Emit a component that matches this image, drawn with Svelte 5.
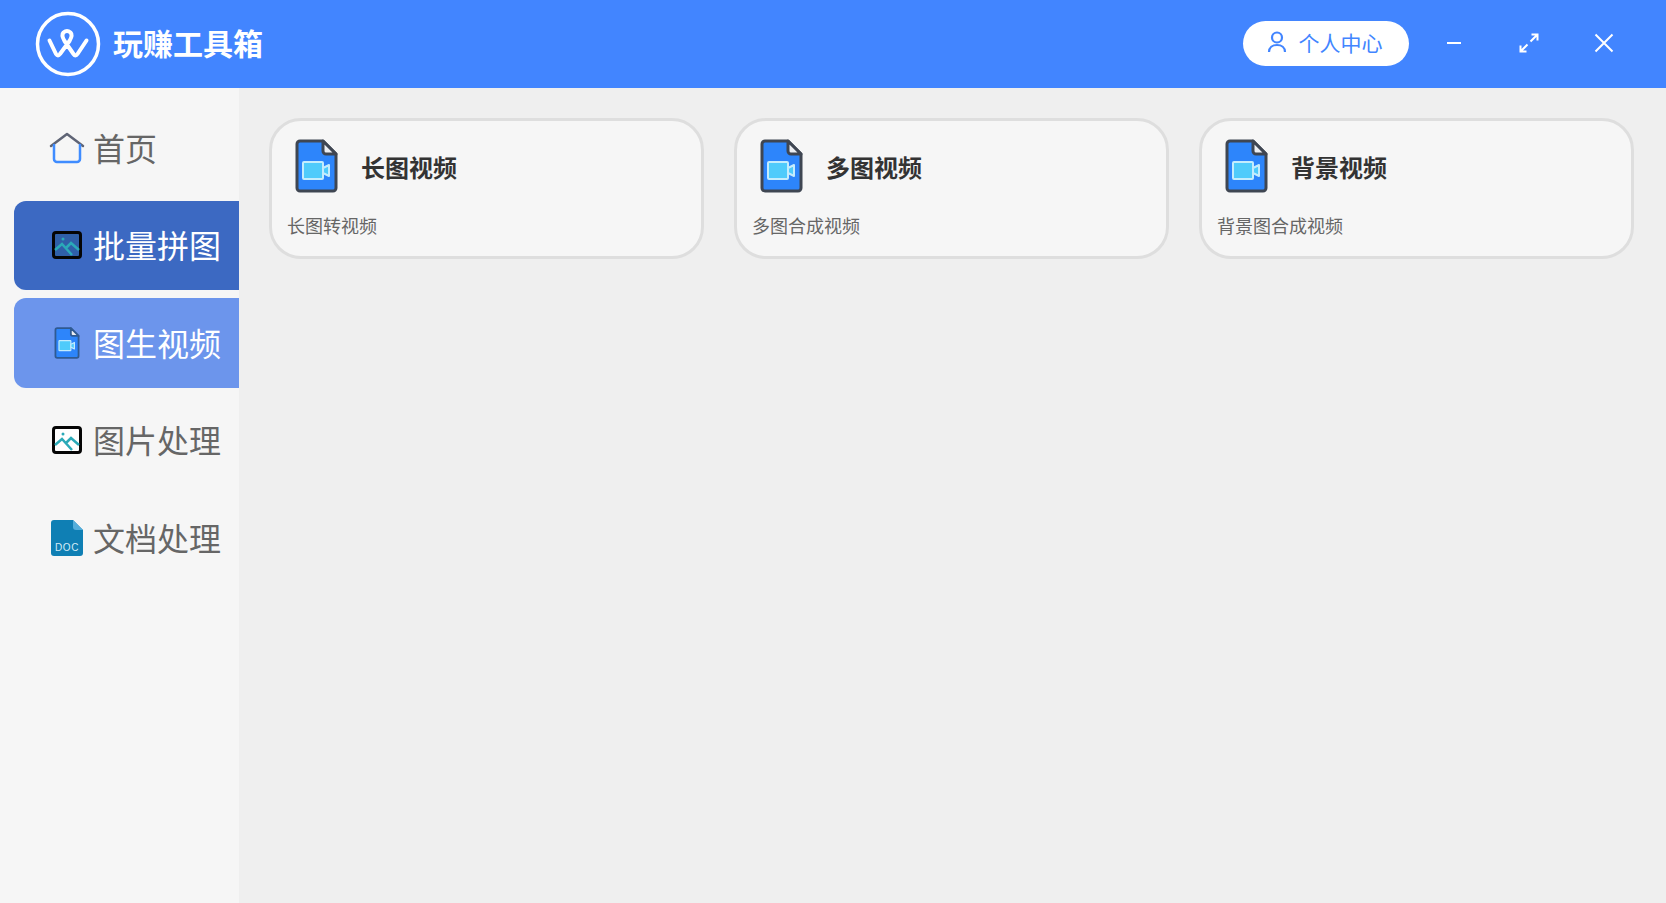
<script>
	const nav = [
		{ label: '首页', icon: 'home' },
		{ label: '批量拼图', icon: 'pic', cls: 'dark' },
		{ label: '图生视频', icon: 'file', cls: 'light' },
		{ label: '图片处理', icon: 'pic' },
		{ label: '文档处理', icon: 'doc' }
	];
	const cards = [
		{ title: '长图视频', desc: '长图转视频' },
		{ title: '多图视频', desc: '多图合成视频' },
		{ title: '背景视频', desc: '背景图合成视频' }
	];
</script>

{#snippet fileIcon(w, h, edge)}
	<svg width={w} height={h} viewBox="0 0 43 54">
		<path d="M5 2h23l13 13v34a3 3 0 0 1-3 3H5a3 3 0 0 1-3-3V5a3 3 0 0 1 3-3z" fill="#2d85fb" stroke={edge} stroke-width="3" stroke-linejoin="round" />
		<path d="M28 2v10a3 3 0 0 0 3 3h10z" fill="#eceef2" stroke={edge} stroke-width="3" stroke-linejoin="round" />
		<rect x="8" y="23" width="20" height="17" rx="1" fill="#4fcbfb" stroke="#c4ecfd" stroke-width="2" />
		<path d="M28 29l6-3v11l-6-3z" fill="#4fcbfb" stroke="#c4ecfd" stroke-width="2" stroke-linejoin="round" />
	</svg>
{/snippet}

<div class="app">
	<header>
		<svg class="logo" width="66" height="66" viewBox="0 0 66 66" fill="none" stroke="#fff" stroke-linecap="round" stroke-linejoin="round">
			<circle cx="33" cy="33" r="30.500" stroke-width="3.500" />
			<path d="M14.500 29.500L21 43Q23 46 25 43L34.500 30Q38 24 35.500 21.500Q32 18.500 28.500 21.500Q26 24 29.500 30L38.500 43Q40.500 46 42.500 43L51.500 29.500" stroke-width="4" />
		</svg>
		<h1>玩赚工具箱</h1>
		<button class="user">
			<svg width="20" height="22" viewBox="0 0 20 22" fill="none" stroke="#4285ff" stroke-width="2.200">
				<circle cx="10" cy="6.500" r="5" />
				<path d="M2 21c0-4.500 3.500-7 8-7s8 2.500 8 7" />
			</svg>
			<span>个人中心</span>
		</button>
		<div class="win">
			<svg width="16" height="16" viewBox="0 0 16 16" stroke="#fff" stroke-width="2"><path d="M1 8h14" /></svg>
		</div>
		<div class="win">
			<svg width="20" height="20" viewBox="0 0 20 20" fill="none" stroke="#fff" stroke-width="2">
				<path d="M11.500 8.500L18 2M12.500 1.500h6v6M8.500 11.500L2 18M7.500 18.500h-6v-6" />
			</svg>
		</div>
		<div class="win">
			<svg width="20" height="20" viewBox="0 0 20 20" stroke="#fff" stroke-width="2"><path d="M1.500 1.500l17 17M18.500 1.500l-17 17" /></svg>
		</div>
	</header>

	<div class="body">
		<aside>
			{#each nav as item}
				<div class="item {item.cls ?? ''}">
					<span class="ico">
						{#if item.icon === 'home'}
							<svg width="36" height="32" viewBox="0 0 36 32" fill="none" stroke-width="2.500" stroke-linecap="round" stroke-linejoin="round">
								<path d="M2 14L18 2l16 12" stroke="#5f6475" />
								<path d="M5 13v14a3 3 0 0 0 3 3h20a3 3 0 0 0 3-3V13" stroke="#3f8cff" />
							</svg>
						{:else if item.icon === 'pic'}
							<svg width="30" height="28" viewBox="0 0 30 28" fill="none">
								<rect x="1.500" y="1.500" width="27" height="25" rx="2.500" fill={item.cls ? '#2f5fa8' : '#fff'} stroke="#050505" stroke-width="3" />
								<circle cx="11" cy="8" r="1.500" fill="#2baab8" />
								<path d="M3 19l7-6 10 11M14 17l5-5 8 7" stroke="#2baab8" stroke-width="2.500" />
							</svg>
						{:else if item.icon === 'file'}
							{@render fileIcon(26, 32, '#2f5a92')}
						{:else}
							<svg width="32" height="36" viewBox="0 0 32 36">
								<path d="M3 0h19l10 10v23a3 3 0 0 1-3 3H3a3 3 0 0 1-3-3V3a3 3 0 0 1 3-3z" fill="#0f7fb4" />
								<path d="M22 0l10 10h-7a3 3 0 0 1-3-3z" fill="#54aedb" />
								<text x="16" y="31" text-anchor="middle" class="doc">DOC</text>
							</svg>
						{/if}
					</span>
					<span class="label">{item.label}</span>
				</div>
			{/each}
		</aside>

		<main>
			{#each cards as card}
				<div class="card">
					<div class="top">
						{@render fileIcon(43, 54, '#3f4652')}
						<h2>{card.title}</h2>
					</div>
					<p>{card.desc}</p>
				</div>
			{/each}
		</main>
	</div>
</div>

<style>
	:global(body) {
		margin: 0;
		font-family: "Noto Sans CJK SC", "Noto Sans", sans-serif;
	}

	.app {
		height: 903px;
		display: flex;
		flex-direction: column;
		overflow: hidden;
	}

	header {
		height: 88px;
		flex: none;
		background: #4285ff;
		display: flex;
		align-items: center;
		padding: 0 25px 2px 35px;
		box-sizing: border-box;
	}

	.logo {
		margin: 2px 12px 0 0;
	}

	h1 {
		margin: 0 0 2px;
		flex: 1;
		color: #fff;
		font-size: 30px;
		font-weight: 700;
	}

	.user {
		width: 166px;
		height: 45px;
		border: 0;
		border-radius: 23px;
		background: #fff;
		color: #4285ff;
		font: inherit;
		font-size: 21px;
		display: flex;
		align-items: center;
		justify-content: center;
		gap: 12px;
		margin-right: 7px;
		padding: 0 3px 2px 0;
	}

	.win {
		width: 75px;
		height: 44px;
		display: flex;
		align-items: center;
		justify-content: center;
	}

	.body {
		flex: 1;
		display: flex;
		background: #efefef;
	}

	aside {
		width: 239px;
		flex: none;
		background: #f6f6f6;
		padding: 15px 0 0 14px;
		box-sizing: border-box;
		display: flex;
		flex-direction: column;
		gap: 8px;
	}

	.item {
		height: 89.500px;
		border-radius: 12px 0 0 12px;
		display: flex;
		align-items: center;
		color: #666;
		font-size: 32px;
	}

	.label {
		margin-bottom: 2px;
	}

	.item.dark {
		background: #3c69c2;
		color: #fff;
	}

	.item.light {
		background: #6c95ec;
		color: #fff;
	}

	.ico {
		width: 79px;
		display: flex;
		justify-content: center;
		padding-left: 27px;
		box-sizing: border-box;
	}

	.doc {
		fill: #d5ecf6;
		font-family: "Liberation Sans", sans-serif;
		font-size: 10px;
		letter-spacing: 0.6px;
	}

	main {
		flex: 1;
		padding: 30px 31px 0 30px;
		display: flex;
		gap: 30px;
		align-items: flex-start;
	}

	.card {
		width: 435px;
		height: 141px;
		box-sizing: border-box;
		background: #f6f6f6;
		border: 3px solid #dedede;
		border-radius: 32px;
		padding: 18px 14px 0 15px;
	}

	.top {
		display: flex;
		align-items: center;
		gap: 23px;
		padding-left: 8px;
	}

	h2 {
		margin: 0;
		font-size: 24px;
		font-weight: 700;
		color: #333;
	}

	p {
		margin: 18px 0 0;
		font-size: 18px;
		color: #666;
		line-height: 28px;
	}
</style>
